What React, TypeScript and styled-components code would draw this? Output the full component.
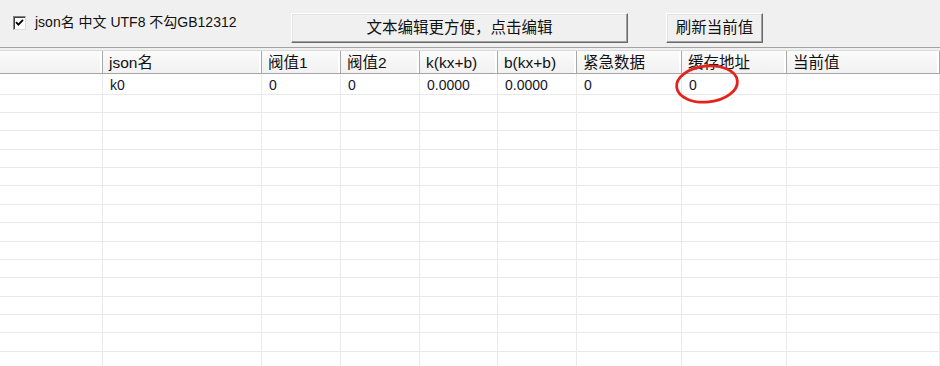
import React from "react";
import styled, { createGlobalStyle } from "styled-components";

const GlobalStyle = createGlobalStyle`
  html, body { margin: 0; padding: 0; background: #f0f0f0; }
  body { font-family: "Liberation Sans", "Noto Sans CJK SC", sans-serif; }
  * { box-sizing: border-box; }
`;

const Page = styled.div`
  position: relative;
  width: 940px;
  height: 366px;
  overflow: hidden;
  display: flex;
  flex-direction: column;
  background: #f0f0f0;
`;

const TopBar = styled.div`
  height: 48px;
  flex: none;
  display: flex;
  align-items: flex-start;
  padding: 13px 0 0 13px;
  border-bottom: 1px solid #a3a3a3;
`;

const CheckLabel = styled.label`
  width: 278px;
  flex: none;
  display: flex;
  align-items: center;
  gap: 9px;
  height: 17px;
  margin-top: 1px;
  font-size: 14px;
  line-height: 17px;
  color: #111;
`;

const CheckBox = styled.span`
  width: 13px;
  height: 14px;
  flex: none;
  background: #fff;
  border: 1px solid #808080;
  border-right-color: #dcdcdc;
  border-bottom-color: #dcdcdc;
  box-shadow: inset 1px 1px 0 #404040;
  display: flex;
  align-items: center;
  justify-content: center;
`;

const Button = styled.div<{ $w: number; $ml: number }>`
  width: ${(p) => p.$w}px;
  margin-left: ${(p) => p.$ml}px;
  height: 30px;
  flex: none;
  display: flex;
  align-items: center;
  justify-content: center;
  background: #f0f0f0;
  border: 1px solid;
  border-color: #ffffff #6a6a6a #6a6a6a #ffffff;
  box-shadow: inset -1px -1px 0 #a0a0a0, inset 1px 1px 0 #e3e3e3;
  font-size: 15.5px;
  line-height: 18px;
  color: #111;
`;

const List = styled.div`
  flex: 1;
  margin-top: 2px;
  background: #fff;
  overflow: hidden;
`;

const COLS = "103px 159px 79px 79px 78px 79px 105px 105px 1fr";

const HeaderRow = styled.div`
  display: grid;
  grid-template-columns: ${COLS};
  height: 24px;
  border-top: 1px solid #dadada;
  border-bottom: 1px solid #a5a5a5;
  background: linear-gradient(#fbfbfb, #f1f1f1);
`;

const HeaderCell = styled.div`
  padding-left: 6px;
  border-right: 1px solid #a8a8a8;
  box-shadow: inset -2px 0 0 #ffffff;
  font-size: 15.5px;
  line-height: 24px;
  color: #111;
  white-space: nowrap;
  overflow: hidden;
`;

const Row = styled.div<{ $first?: boolean }>`
  display: grid;
  grid-template-columns: ${COLS};
  height: ${(p) => (p.$first ? "20.7px" : "18.36px")};
  border-bottom: 1px solid #e9e9e9;
`;

const Cell = styled.div`
  padding-left: 7px;
  border-right: 1px solid #ebebeb;
  font-size: 14px;
  line-height: 23px;
  color: #14142a;
  white-space: nowrap;
  overflow: hidden;
`;

const Mark = styled.svg`
  position: absolute;
  left: 672px;
  top: 61px;
  width: 70px;
  height: 46px;
  pointer-events: none;
`;

const headers = ["", "json名", "阀值1", "阀值2", "k(kx+b)", "b(kx+b)", "紧急数据", "缓存地址", "当前值"];
const firstRow = ["", "k0", "0", "0", "0.0000", "0.0000", "0", "0", ""];

export default function App() {
  const empty = Array.from({ length: 16 }, (_, i) => i);
  return (
    <Page>
      <GlobalStyle />
      <TopBar>
        <CheckLabel>
          <CheckBox>
            <svg width="9" height="9" viewBox="0 0 9 9">
              <path d="M1 4.2 L3.4 6.6 L8 1.8" stroke="#000" strokeWidth="1.8" fill="none" />
            </svg>
          </CheckBox>
          <span>json名 中文 UTF8 不勾GB12312</span>
        </CheckLabel>
        <Button $w={337} $ml={0}>文本编辑更方便，点击编辑</Button>
        <Button $w={97} $ml={38}>刷新当前值</Button>
      </TopBar>
      <List>
        <HeaderRow>
          {headers.map((h, i) => (
            <HeaderCell key={i}>{h}</HeaderCell>
          ))}
        </HeaderRow>
        <Row $first>
          {firstRow.map((v, i) => (
            <Cell key={i}>{v}</Cell>
          ))}
        </Row>
        {empty.map((r) => (
          <Row key={r}>
            {headers.map((_, i) => (
              <Cell key={i} />
            ))}
          </Row>
        ))}
      </List>
      <Mark viewBox="0 0 70 46">
        <ellipse
          cx="35"
          cy="23"
          rx="30.5"
          ry="18"
          transform="rotate(-6 35 23)"
          fill="none"
          stroke="#e3231c"
          strokeWidth="2.8"
        />
      </Mark>
    </Page>
  );
}
